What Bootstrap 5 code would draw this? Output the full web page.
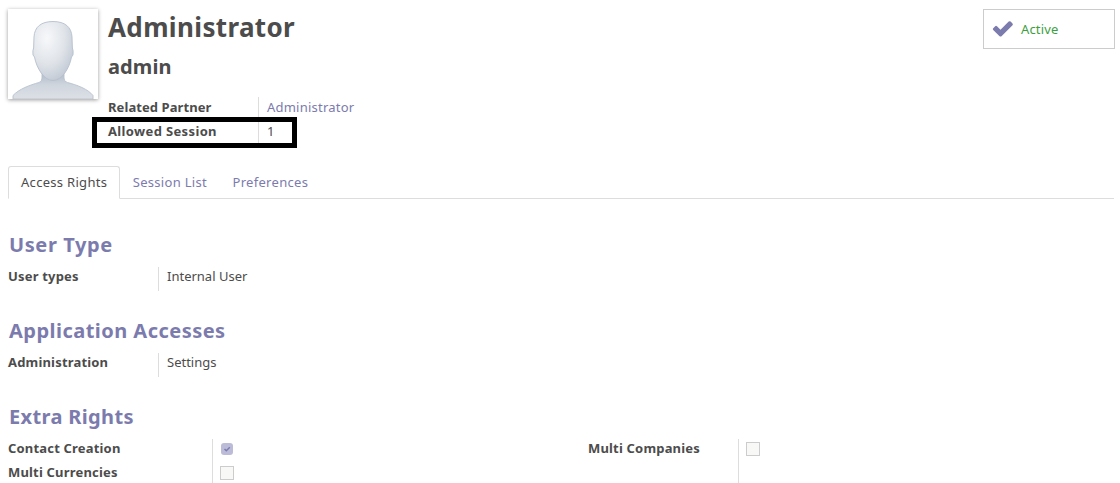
<!DOCTYPE html>
<html lang="en">
<head>
<meta charset="utf-8">
<title>Administrator</title>
<meta name="viewport" content="width=device-width, initial-scale=1">
<link href="https://cdn.jsdelivr.net/npm/bootstrap@5.3.0/dist/css/bootstrap.min.css" rel="stylesheet">
<style>
  body { font-family: "Noto Sans", "Open Sans", sans-serif; font-size: 13px; line-height: 24px; color: #4c4c4c; height: 483px; overflow: hidden; }
  a { color: #7c7bad; text-decoration: none; }
  .sheet { padding: 9px 6px 0 8px; }
  .header-row { height: 157px; }
  .avatar { width: 90px; height: 90px; box-shadow: 0 1px 4px rgba(0,0,0,.4); }
  .title { font-size: 26px; line-height: 37px; font-weight: 700; letter-spacing: .36px; margin-bottom: 1px; }
  .login { font-size: 20px; line-height: 40px; font-weight: 700; letter-spacing: .1px; }
  .title-block { width: 260px; margin-left: 10px; }
  .details { margin-top: 10px; }
  .field-label { font-weight: 700; letter-spacing: .18px; height: 24px; line-height: 20px; }
  .field-value { border-left: 1px solid #ddd; padding-left: 8px; min-height: 24px; line-height: 20px; letter-spacing: 0; }
  .groups .field-label, .groups .field-value { line-height: 18px; }
  .details .field-value { letter-spacing: .22px; }
  .session-label { letter-spacing: .36px; }
  .partner-label { letter-spacing: .08px; }
  .w-label { width: 150px; }
  .w-wide { width: 204px; }
  .highlight { left: -16px; top: 20px; width: 205px; height: 31px; border: 5px solid #000; }
  .stat { width: 132px; height: 40px; border: 1px solid #ccc; color: #3c9f3f; padding-left: 8px; gap: 7px; margin-right: -1px; letter-spacing: .15px; }
  .nav-tabs { height: 33px; --bs-nav-link-padding-x: 12px; --bs-nav-link-padding-y: 0; --bs-nav-tabs-border-color: #ddd; --bs-nav-tabs-border-radius: 3px; --bs-nav-link-color: #7c7bad; --bs-nav-tabs-link-active-color: #4c4c4c; --bs-nav-tabs-link-active-border-color: #ddd #ddd #fff; }
  .nav-tabs .nav-link { line-height: 31px; font-size: 13px; letter-spacing: .3px; padding-right: 11.500px; }
  .nav-tabs .nav-link:hover { border-color: transparent; }
  .nav-tabs .nav-link.active { border-color: #ddd #ddd #fff; }
  .group-title { font-size: 20px; line-height: 26px; font-weight: 700; color: #7c7bad; margin: 0 0 9px 1px; letter-spacing: .47px; }
  .title-short { letter-spacing: .6px; }
  .title-extra { letter-spacing: .35px; }
  .group-block { height: 86px; }
  .groups { padding-top: 33px; }
  .check { width: 14px; height: 14px; margin: 3px 0 0 -1px; border: 1px solid #ccc; background: #f8f8f6; }
  .check-on { width: 12px; height: 12px; margin: 4px 0 8px; background: #bdbcd8; border-radius: 3px; }
  .half { width: 580px; }
  .half-label { width: 150px; }
</style>
</head>
<body>
<main class="sheet">
  <header class="header-row d-flex align-items-start">
    <svg class="avatar flex-shrink-0" viewBox="0 0 90 90" aria-label="Avatar">
      <defs>
        <radialGradient id="face" cx=".35" cy=".28" r=".8"><stop offset="0" stop-color="#f7f8fa"/><stop offset=".55" stop-color="#e0e4e9"/><stop offset="1" stop-color="#bec6d2"/></radialGradient>
        <linearGradient id="torso" x1="0" x2="0" y1="0" y2="1"><stop offset="0" stop-color="#aab5c6"/><stop offset=".5" stop-color="#d0d6de"/><stop offset="1" stop-color="#dce0e6"/></linearGradient>
      </defs>
      <rect width="90" height="90" fill="#fff"/>
      <path d="M5 90V86.500C11 80 22 76 31 73.500Q34 73 34 69V62H56V69Q56 73 59.500 73.500C69 76 80 80 85 86.500V90Z" fill="url(#torso)" stroke="#b9c2ce" stroke-width=".9"/>
      <path d="M45 12.500C33 12.500 26.500 18 26 28L25.600 39Q24.500 41 25 46L26.500 48C28.500 59 36 71.500 45 71.500C54 71.500 61.500 59 63.500 48L65 46Q65.500 41 64.400 39L64 28C63.500 18 57 12.500 45 12.500Z" fill="url(#face)" stroke="#b6c0ce" stroke-width=".9"/>
    </svg>
    <div class="title-block">
      <h1 class="title">Administrator</h1>
      <div class="login">admin</div>
      <div class="details d-flex position-relative">
        <div class="w-label"><div class="field-label partner-label">Related Partner</div><div class="field-label session-label">Allowed Session</div></div>
        <div><div class="field-value"><a href="#">Administrator</a></div><div class="field-value">1</div></div>
        <div class="highlight position-absolute"></div>
      </div>
    </div>
    <div class="stat ms-auto d-flex align-items-center">
      <svg width="22" height="18" viewBox="0 0 22 18" aria-hidden="true"><path d="M1.200 8.300L3.200 6.200Q4.100 5.500 5 6.300L8.500 9.700L16.700 1.600Q17.700 .8 18.600 1.600L20.500 3.500Q21.300 4.400 20.500 5.300L9.500 16.200Q8.500 17 7.600 16.200L1.200 10Q.4 9.100 1.200 8.300Z" fill="#7c7bad"/></svg>
      <span>Active</span>
    </div>
  </header>
  <ul class="nav nav-tabs">
    <li class="nav-item"><a class="nav-link active" href="#">Access Rights</a></li>
    <li class="nav-item"><a class="nav-link" href="#">Session List</a></li>
    <li class="nav-item"><a class="nav-link" href="#">Preferences</a></li>
  </ul>
  <div class="groups">
    <section class="group-block">
      <h2 class="group-title title-short">User Type</h2>
      <div class="d-flex"><div class="field-label w-label">User types</div><div class="field-value">Internal User</div></div>
    </section>
    <section class="group-block">
      <h2 class="group-title">Application Accesses</h2>
      <div class="d-flex"><div class="field-label w-label">Administration</div><div class="field-value">Settings</div></div>
    </section>
    <section class="group-block">
      <h2 class="group-title title-extra">Extra Rights</h2>
      <div class="d-flex">
        <div class="half d-flex">
          <div class="w-wide"><div class="field-label">Contact Creation</div><div class="field-label">Multi Currencies</div></div>
          <div><div class="field-value"><div class="d-flex"><div class="check-on d-flex"><svg width="12" height="12" viewBox="0 0 12 12"><path d="M3.500 6L5.300 7.800L8.800 4.300" fill="none" stroke="#7c7bad" stroke-width="1.500"/></svg></div></div></div><div class="field-value"><div class="d-flex"><div class="check"></div></div></div></div>
        </div>
        <div class="field-label half-label">Multi Companies</div>
        <div class="field-value"><div class="d-flex"><div class="check"></div></div></div>
      </div>
    </section>
  </div>
</main>
<script src="https://cdn.jsdelivr.net/npm/bootstrap@5.3.0/dist/js/bootstrap.bundle.min.js"></script>
</body>
</html>
